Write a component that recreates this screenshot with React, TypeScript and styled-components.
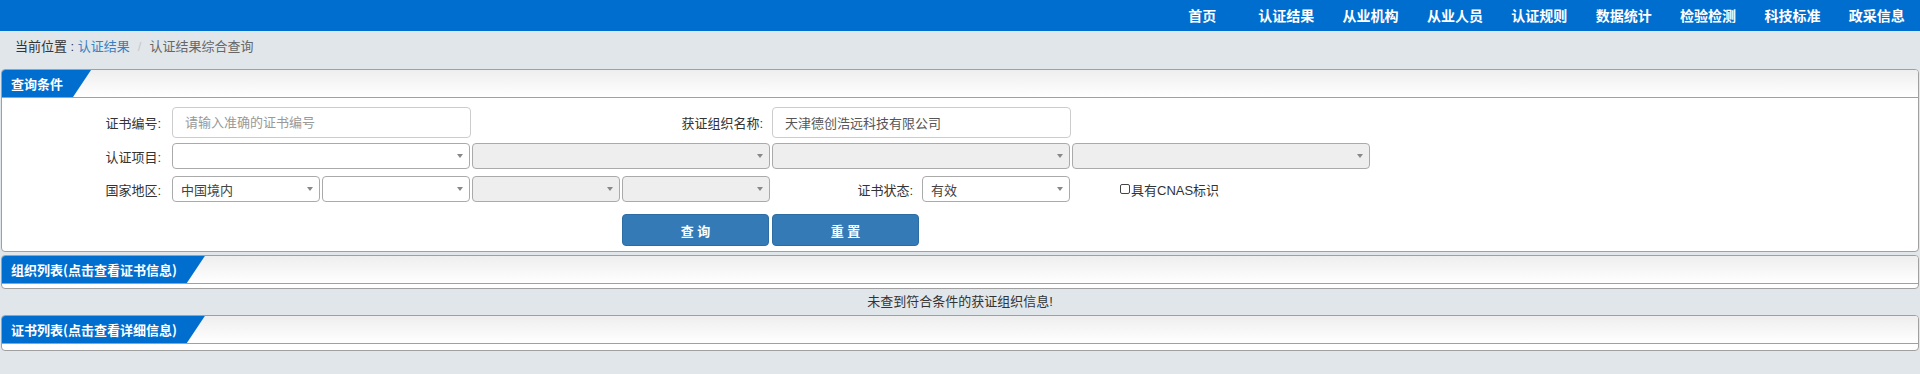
import React from "react";
import styled, { createGlobalStyle } from "styled-components";

const GlobalStyle = createGlobalStyle`
  html, body { margin: 0; padding: 0; }
  body {
    background: #e1e6ea;
    font-family: "Liberation Sans", Arial, "Noto Sans CJK SC", sans-serif;
    font-size: 13px;
    color: #333;
  }
  * { box-sizing: border-box; }
`;

const BLUE = "#006ecf";
const LINE = "#a0a0a0";

const TopBar = styled.header`
  height: 31px;
  background: ${BLUE};
  display: flex;
  justify-content: flex-end;
  align-items: center;
  padding-right: 1px;
`;

const NavItem = styled.a<{ $first?: boolean }>`
  color: #fff;
  font-family: "Noto Sans CJK SC", sans-serif;
  font-size: 14px;
  font-weight: bold;
  line-height: 31px;
  padding: 0 14.2px;
  text-decoration: none;
  margin-right: ${(p) => (p.$first ? "13.6px" : "0")};
`;

const Breadcrumb = styled.nav`
  height: 38px;
  padding: 7px 15px 0;
  line-height: 18px;
  font-size: 13px;
  color: #333;
`;

const CrumbLink = styled.a`
  color: #3a7fc0;
  text-decoration: none;
`;

const CrumbSep = styled.span`
  color: #c8c8c8;
  padding: 0 8px;
`;

const CrumbCurrent = styled.span`
  color: #666;
`;

const Panel = styled.section<{ $mt?: number }>`
  margin: ${(p) => p.$mt ?? 0}px 1px 0 1px;
  border: 1px solid ${LINE};
  border-radius: 4px;
  background: #fff;
  overflow: hidden;
`;

const PanelHeader = styled.div`
  height: 28px;
  border-bottom: 1px solid ${LINE};
  background: linear-gradient(#eeeeee, #ffffff);
  display: flex;
`;

const PanelTab = styled.h3`
  margin: 0;
  height: 27px;
  line-height: 27px;
  background: ${BLUE};
  color: #fff;
  font-family: "Noto Sans CJK SC", sans-serif;
  font-size: 13px;
  font-weight: bold;
  padding: 0 28px 0 9px;
  clip-path: polygon(0 0, 100% 0, calc(100% - 18px) 100%, 0 100%);
  white-space: nowrap;
`;

const PanelBody = styled.div<{ $h?: number }>`
  min-height: ${(p) => p.$h ?? 0}px;
`;

const FormBody = styled.div`
  padding: 9px 0 5px;
`;

const FormRow = styled.div<{ $mt?: number }>`
  display: grid;
  grid-template-columns: 170px repeat(8, 150px);
  align-items: center;
  margin-top: ${(p) => p.$mt ?? 0}px;
`;

const Label = styled.label<{ $col?: string; $pr?: number }>`
  grid-column: ${(p) => p.$col ?? "1"};
  text-align: right;
  padding-right: ${(p) => p.$pr ?? 11}px;
  font-size: 13px;
  color: #333;
  white-space: nowrap;
`;

const TextInput = styled.input<{ $col: string }>`
  grid-column: ${(p) => p.$col};
  width: calc(100% - 1px);
  height: 31px;
  border: 1px solid #ccc;
  border-radius: 4px;
  padding: 0 12px;
  font-family: inherit;
  font-size: 13px;
  color: #555;
  background: #fff;
  outline: none;
  &::placeholder { color: #999; }
`;

const SelectBox = styled.div<{ $col: string; $disabled?: boolean }>`
  grid-column: ${(p) => p.$col};
  width: calc(100% - 2px);
  height: 26px;
  border: 1px solid #aaa;
  border-radius: 4px;
  background: ${(p) => (p.$disabled ? "#eeeeee" : "#fff")};
  display: flex;
  align-items: center;
  justify-content: space-between;
  padding: 0 6px 0 8px;
  font-size: 13px;
  color: #444;
`;

const Arrow = styled.span`
  width: 0;
  height: 0;
  border-style: solid;
  border-width: 4px 3px 0 3px;
  border-color: #888 transparent transparent transparent;
`;

const CheckLabel = styled.label<{ $col: string }>`
  grid-column: ${(p) => p.$col};
  display: flex;
  align-items: center;
  padding-left: 48px;
  font-size: 13px;
  color: #333;
  white-space: nowrap;
`;

const Check = styled.input`
  appearance: none;
  width: 10px;
  height: 10px;
  margin: 0 1px 0 0;
  border: 1px solid #444;
  border-radius: 2px;
  background: #fff;
`;

const Button = styled.button<{ $col: string }>`
  grid-column: ${(p) => p.$col};
  width: 147px;
  height: 32px;
  background: #337ab7;
  border: 1px solid #2e6da4;
  border-radius: 4px;
  color: #fff;
  font-family: "Liberation Sans", "Noto Sans CJK SC", sans-serif;
  font-size: 13px;
  font-weight: bold;
  cursor: pointer;
`;

const Message = styled.div`
  height: 26px;
  line-height: 26px;
  text-align: center;
  font-size: 13px;
  color: #333;
`;

const navItems = ["认证结果", "从业机构", "从业人员", "认证规则", "数据统计", "检验检测", "科技标准", "政采信息"];

const Select: React.FC<{ col: string; disabled?: boolean; value?: string }> = ({ col, disabled, value }) => (
  <SelectBox $col={col} $disabled={disabled}>
    <span>{value ?? ""}</span>
    <Arrow />
  </SelectBox>
);

export default function App() {
  return (
    <>
      <GlobalStyle />
      <TopBar>
        <NavItem $first>首页</NavItem>
        {navItems.map((n) => (
          <NavItem key={n}>{n}</NavItem>
        ))}
      </TopBar>
      <Breadcrumb>
        当前位置 : <CrumbLink>认证结果</CrumbLink>
        <CrumbSep>/</CrumbSep>
        <CrumbCurrent>认证结果综合查询</CrumbCurrent>
      </Breadcrumb>

      <Panel>
        <PanelHeader>
          <PanelTab>查询条件</PanelTab>
        </PanelHeader>
        <FormBody>
          <FormRow>
            <Label>证书编号:</Label>
            <TextInput $col="2 / span 2" placeholder="请输入准确的证书编号" />
            <Label $col="4 / span 2" $pr={9}>获证组织名称:</Label>
            <TextInput $col="6 / span 2" defaultValue="天津德创浩远科技有限公司" />
          </FormRow>
          <FormRow $mt={5}>
            <Label>认证项目:</Label>
            <Select col="2 / span 2" />
            <Select col="4 / span 2" disabled />
            <Select col="6 / span 2" disabled />
            <Select col="8 / span 2" disabled />
          </FormRow>
          <FormRow $mt={7}>
            <Label>国家地区:</Label>
            <Select col="2" value="中国境内" />
            <Select col="3" />
            <Select col="4" disabled />
            <Select col="5" disabled />
            <Label $col="6" $pr={9}>证书状态:</Label>
            <Select col="7" value="有效" />
            <CheckLabel $col="8">
              <Check type="checkbox" />具有CNAS标识
            </CheckLabel>
          </FormRow>
          <FormRow $mt={12}>
            <Button $col="5">查 询</Button>
            <Button $col="6">重 置</Button>
          </FormRow>
        </FormBody>
      </Panel>

      <Panel $mt={3}>
        <PanelHeader>
          <PanelTab>组织列表(点击查看证书信息)</PanelTab>
        </PanelHeader>
        <PanelBody $h={4} />
      </Panel>
      <Message>未查到符合条件的获证组织信息!</Message>
      <Panel>
        <PanelHeader>
          <PanelTab>证书列表(点击查看详细信息)</PanelTab>
        </PanelHeader>
        <PanelBody $h={6} />
      </Panel>
    </>
  );
}
